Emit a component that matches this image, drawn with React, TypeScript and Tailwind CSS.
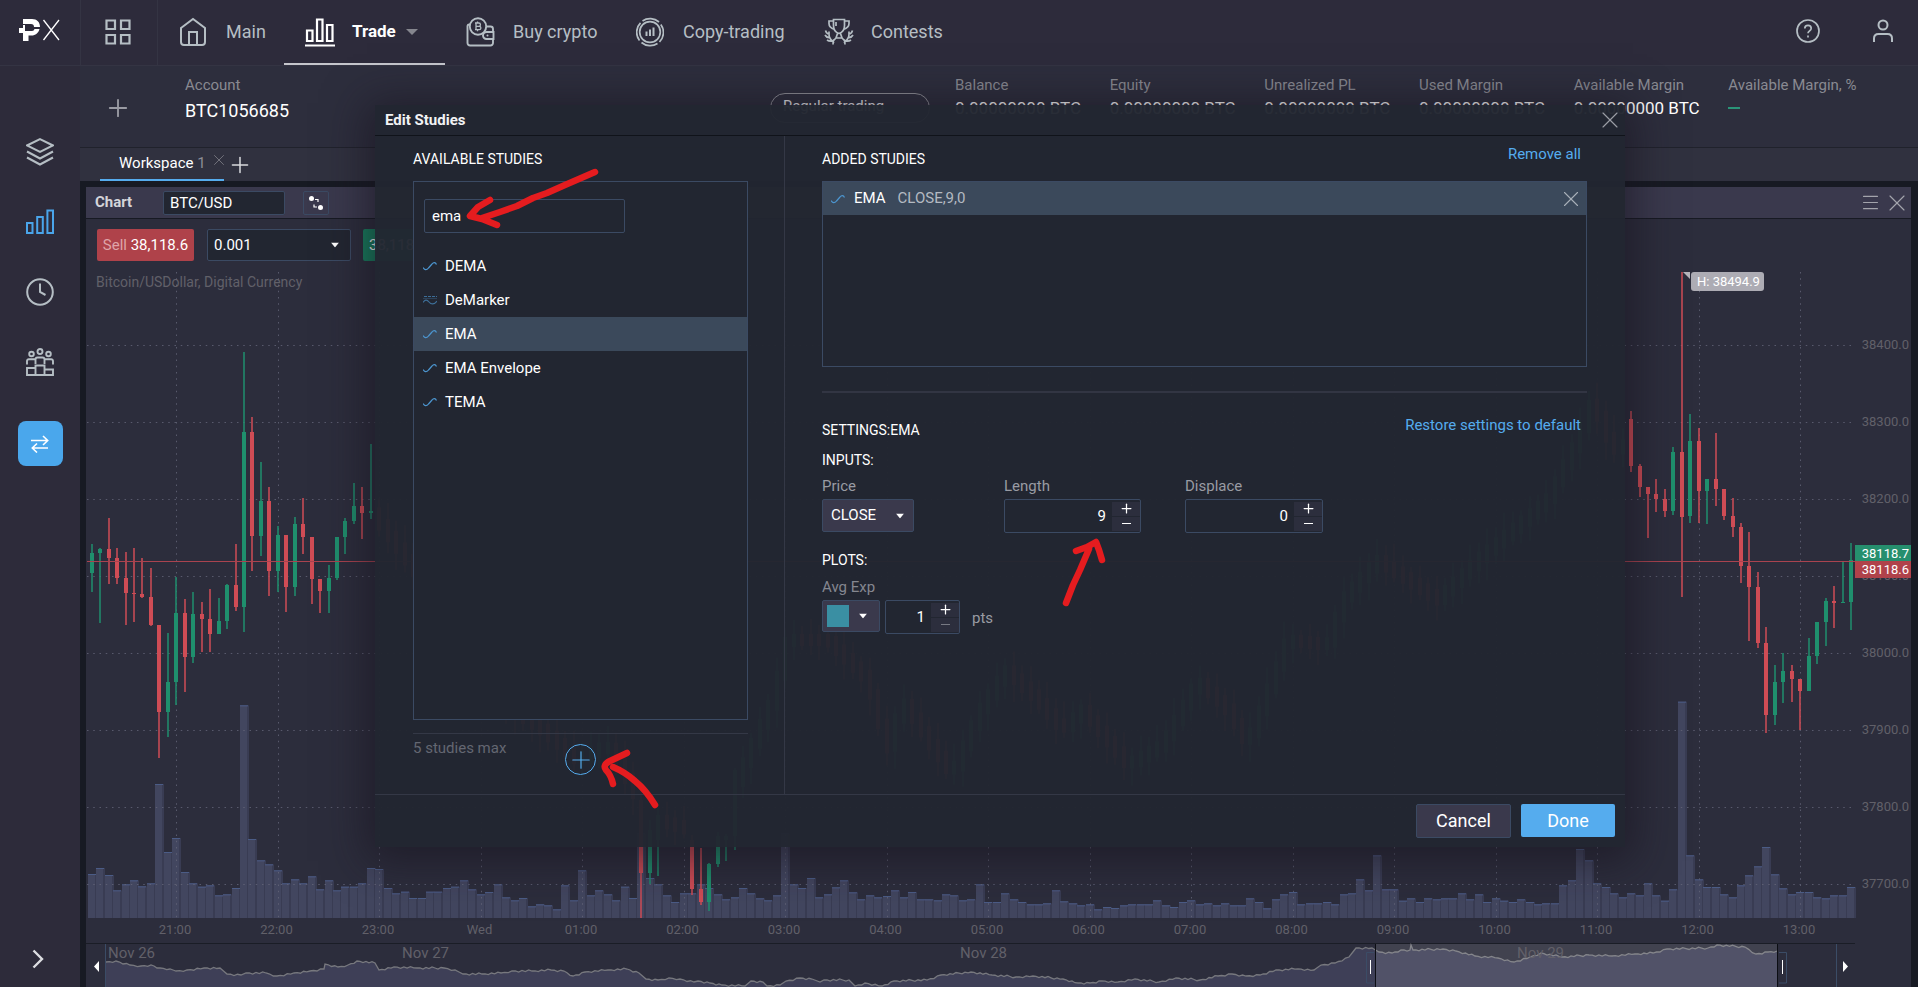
import React, { useId } from "react";
import { Menu, X, Plus } from "lucide-react";

type Candle = [index: number, high: number, top: number, bottom: number, low: number, up: 0 | 1];

const STEP = 8.458;
const xAt = (index: number) => 176.3 + STEP * (index - 10);

const CANDLES: Candle[] = [
  [0, 544, 553, 573, 592, 1], [1, 548, 549, 553, 623, 1], [2, 518, 549, 558, 584, 0], [3, 548, 558, 578, 584, 0],
  [4, 552, 578, 593, 625, 0], [5, 548, 593, 594, 622, 0], [6, 558, 594, 597, 598, 0], [7, 568, 597, 625, 626, 0],
  [8, 625, 625, 712, 758, 0], [9, 633, 682, 712, 737, 1], [10, 577, 613, 682, 705, 1], [11, 599, 613, 657, 692, 0],
  [12, 592, 614, 657, 663, 1], [13, 602, 614, 619, 652, 0], [14, 589, 619, 634, 652, 0], [15, 598, 621, 634, 634, 1],
  [16, 584, 585, 621, 629, 1], [17, 544, 585, 607, 611, 0], [18, 352, 432, 607, 632, 1], [19, 417, 432, 536, 571, 0],
  [20, 462, 501, 536, 556, 1], [21, 487, 501, 571, 596, 0], [22, 526, 535, 571, 592, 1], [23, 535, 535, 587, 612, 0],
  [24, 517, 524, 587, 596, 1], [25, 498, 524, 537, 554, 0], [26, 537, 537, 579, 604, 0], [27, 579, 579, 591, 613, 0],
  [28, 565, 578, 591, 613, 1], [29, 537, 537, 578, 580, 1], [30, 518, 521, 537, 554, 1], [31, 483, 506, 521, 524, 1],
  [32, 487, 506, 513, 539, 0], [33, 444, 511, 513, 519, 1],
  [65, 780, 800, 873, 918, 0], [66, 820, 830, 873, 884, 1], [67, 800, 815, 840, 876, 1], [71, 835, 840, 889, 895, 0],
  [72, 848, 889, 902, 905, 0], [73, 863, 864, 902, 911, 1], [74, 832, 836, 864, 867, 1], [75, 834, 836, 840, 861, 1],
  [76, 768, 770, 836, 850, 1],
  [182, 411, 419, 466, 472, 0], [183, 464, 466, 487, 497, 0], [184, 487, 487, 494, 538, 0], [185, 479, 494, 499, 512, 0],
  [186, 489, 499, 511, 517, 0], [187, 447, 452, 511, 515, 1], [188, 272, 452, 517, 597, 0], [189, 414, 441, 516, 523, 1],
  [190, 428, 441, 491, 523, 0], [191, 479, 479, 491, 524, 1], [192, 433, 479, 489, 506, 0], [193, 489, 489, 516, 520, 0],
  [194, 498, 516, 527, 537, 0], [195, 523, 527, 566, 583, 0], [196, 532, 566, 587, 641, 0], [197, 572, 587, 643, 648, 0],
  [198, 627, 643, 715, 733, 0], [199, 665, 682, 715, 725, 1], [200, 653, 671, 682, 703, 1], [201, 665, 671, 679, 702, 0],
  [202, 679, 679, 691, 730, 0], [203, 638, 656, 691, 691, 1], [204, 622, 622, 656, 664, 1], [205, 598, 601, 622, 646, 1],
  [206, 586, 601, 603, 628, 0], [207, 562, 602, 603, 603, 1], [208, 543, 560, 602, 630, 1],
];

/* Price path of the stretch that lies beneath the dialog. */
const TREND: [number, number][] = [
  [380, 520], [420, 575], [460, 640], [500, 700], [545, 730], [580, 760], [610, 745], [641, 800], [660, 820], [693, 830],
  [735, 790], [755, 745], [775, 700], [790, 640], [830, 640], [870, 680], [890, 750], [905, 700], [930, 740], [955, 775],
  [980, 715], [1008, 670], [1040, 700], [1065, 730], [1085, 710], [1130, 765], [1165, 745], [1190, 700], [1200, 680],
  [1230, 710], [1250, 745], [1275, 680], [1290, 640], [1330, 645], [1345, 600], [1380, 560], [1440, 600], [1480, 560],
  [1550, 500], [1580, 440], [1595, 400], [1615, 450], [1640, 440],
];

function trendAt(x: number) {
  const k = Math.max(1, TREND.findIndex(([tx]) => tx >= x));
  const [x0, y0] = TREND[k - 1];
  const [x1, y1] = TREND[k];
  return y0 + ((y1 - y0) * (x - x0)) / (x1 - x0);
}

const listed = new Set(CANDLES.map((c) => c[0]));
const COVERED: Candle[] = Array.from({ length: 148 }, (_, k) => k + 34)
  .filter((i) => !listed.has(i))
  .map((i) => {
    const a = trendAt(xAt(i) - 4);
    const b = trendAt(xAt(i) + 4);
    const top = Math.min(a, b) - 6;
    const bottom = Math.max(a, b) + 6;
    return [i, top - 5 - ((i * 7) % 13), top, bottom, bottom + 4 + ((i * 5) % 14), b < a ? 1 : 0];
  });

/* Bar tops, in thirds of a pixel below y = 620. */
const VOLUME = [
  762, 744, 765, 811, 793, 781, 799, 790, 492, 696, 654, 756, 790, 800, 796, 826, 823, 804, 256, 657, 721, 733, 751, 790,
  778, 790, 769, 808, 781, 811, 800, 800, 790, 744, 747, 804, 820, 815, 834, 834, 815, 815, 804, 800, 781, 808, 823, 816,
  793, 832, 841, 834, 859, 853, 856, 868, 796, 841, 751, 826, 811, 823, 841, 800, 834, 640, 774, 793, 826, 846, 820, 820,
  793, 804, 823, 838, 832, 804, 820, 835, 841, 826, 640, 793, 804, 774, 832, 823, 802, 781, 817, 838, 826, 832, 828, 811,
  832, 816, 838, 838, 841, 823, 826, 841, 838, 793, 846, 846, 820, 838, 846, 853, 853, 850, 811, 844, 850, 856, 853, 868,
  861, 864, 856, 853, 853, 853, 841, 856, 861, 846, 841, 853, 850, 856, 850, 856, 856, 835, 846, 865, 838, 823, 816, 853,
  850, 850, 846, 853, 823, 820, 778, 811, 706, 808, 808, 842, 835, 846, 835, 838, 835, 835, 820, 838, 823, 846, 835, 842,
  846, 838, 846, 853, 850, 850, 796, 781, 687, 721, 790, 801, 820, 832, 820, 826, 790, 826, 842, 808, 245, 706, 778, 801,
  801, 823, 832, 796, 766, 739, 681, 763, 805, 823, 816, 816, 832, 835, 826, 826, 801,
];

const NAV: [number, number][] = [
  [106, 962], [116, 961], [130, 965], [141, 966], [151, 965], [160, 968], [170, 969], [176, 971], [187, 970], [204, 968],
  [220, 968], [227, 974], [241, 975], [246, 973], [266, 973], [277, 976], [294, 973], [310, 971], [324, 969], [325, 964],
  [338, 967], [348, 965], [357, 961], [375, 963], [379, 970], [394, 967], [417, 968], [444, 968], [455, 970], [463, 974],
  [482, 974], [501, 973], [512, 971], [532, 971], [551, 970], [564, 971], [573, 976], [585, 972], [608, 970], [627, 969],
  [639, 973], [646, 979], [658, 980], [669, 978], [680, 979], [694, 982], [698, 981], [710, 983], [722, 985], [745, 986],
  [751, 981], [763, 982], [767, 986], [780, 985], [786, 981], [800, 978], [812, 979], [820, 982], [824, 980], [849, 980],
  [855, 986], [865, 983], [882, 986], [894, 981], [927, 980], [941, 975], [971, 972], [992, 975], [1016, 977], [1033, 976],
  [1063, 979], [1078, 983], [1090, 983], [1102, 981], [1118, 982], [1135, 979], [1159, 982], [1176, 978], [1200, 980],
  [1218, 976], [1232, 974], [1246, 976], [1260, 975], [1276, 970], [1298, 969], [1314, 970], [1321, 965], [1335, 963],
  [1349, 957], [1356, 948], [1372, 948], [1379, 952], [1392, 953], [1401, 950], [1410, 950], [1411, 945], [1413, 950],
  [1443, 949], [1456, 951], [1475, 956], [1498, 958], [1514, 962], [1530, 957], [1541, 953], [1562, 957], [1589, 955],
  [1612, 956], [1635, 954], [1653, 953], [1667, 949], [1708, 948], [1717, 945], [1745, 947], [1756, 954], [1768, 952],
  [1777, 951],
];

const NAV_LINE = NAV.flatMap(([x, y], k) => {
  const next = NAV[k + 1];
  if (!next) return [`${x},${y}`];
  const n = Math.max(1, Math.floor((next[0] - x) / 3));
  return Array.from({ length: n }, (_, j) => {
    const jitter = j === 0 ? 0 : (((k * 5 + j * 7) % 5) - 2) * 0.5;
    return `${x + ((next[0] - x) * j) / n},${y + ((next[1] - y) * j) / n + jitter}`;
  });
}).join(" ");

const HOURS = ["21:00", "22:00", "23:00", "Wed", "01:00", "02:00", "03:00", "04:00", "05:00", "06:00", "07:00", "08:00", "09:00", "10:00", "11:00", "12:00", "13:00"];
const PRICES = ["38400.0", "38300.0", "38200.0", "38100.0", "38000.0", "37900.0", "37800.0", "37700.0"];

function Chart() {
  return (
    <svg className="block min-h-0 w-full flex-1" viewBox="86 271 1825 716" preserveAspectRatio="xMinYMin slice" fontFamily="Roboto, sans-serif" role="img" aria-label="BTC/USD price chart">
      <text x="96" y="287" fontSize="14" fill="#616069">Bitcoin/USDollar, Digital Currency</text>
      {VOLUME.map((v, i) => {
        const y = 620 + v / 3;
        const x = Math.round(xAt(i) - 4);
        return (
          <g key={i}>
            <rect x={x} y={y} width="8" height={918 - y} fill="#42465f" />
            <rect x={x + 7} y={y} width="2" height={918 - y} fill="#393c53" />
            <rect x={x} y={y} width="8" height="1" fill="#4b5c86" />
          </g>
        );
      })}
      <g stroke="#646679" strokeWidth="1" strokeDasharray="1.5 4.75" opacity="0.8">
        {PRICES.map((p, k) => <line key={p} x1="87" x2="1854" y1={345.5 + k * 77} y2={345.5 + k * 77} />)}
        {HOURS.map((h, k) => <line key={h} x1={Math.round(176 + k * 101.5) + 0.5} x2={Math.round(176 + k * 101.5) + 0.5} y1="272" y2="918" />)}
      </g>
      {[...CANDLES, ...COVERED].map(([i, hi, top, bottom, lo, up]) => {
        const x = Math.round(xAt(i));
        return (
          <g key={i} fill={up ? "#1f8f6d" : "#cf4c55"}>
            <rect x={x - 1} y={hi} width="2" height={lo - hi} opacity="0.75" />
            <rect x={x - 2} y={top} width="4" height={Math.max(1, bottom - top)} />
          </g>
        );
      })}
      <rect x="87" y="561" width="1768" height="1" fill="#a9434f" />
      <g fontSize="13" fill="#616069">
        {PRICES.map((p, k) => <text key={p} x="1909" y={349 + k * 77} textAnchor="end">{p}</text>)}
        {HOURS.map((h, k) => <text key={h} x={175 + k * 101.5} y="934" textAnchor="middle">{h}</text>)}
      </g>
      <rect x="1855" y="545" width="56" height="16" fill="#268f6e" />
      <rect x="1855" y="561" width="56" height="17" fill="#b0424a" />
      <g fontSize="13" fill="#fff">
        <text x="1909" y="558" textAnchor="end">38118.7</text>
        <text x="1909" y="574" textAnchor="end">38118.6</text>
      </g>
      <path d="M1683 272h7v7z" fill="#b5b4bb" />
      <rect x="1691" y="272" width="73" height="19" rx="3" fill="#adacb4" />
      <text x="1697" y="286" fontSize="13" fill="#fff">H: 38494.9</text>

      <rect x="86" y="943" width="1769" height="1" fill="#1a1d26" />
      <polygon points={`106,987 ${NAV_LINE} 1777,987`} fill="#3e3f57" />
      <polyline points={NAV_LINE} fill="none" stroke="#77787e" strokeWidth="1.3" />
      <rect x="1375" y="944" width="402" height="43" fill="#fff" opacity="0.1" />
      <path d="M1375.500 944v43M1777.500 944v43" stroke="#0c0e14" />
      <path d="M105.500 944v43M1836.500 944v43M1374 952.500h-7.500v30.500h7.500M1779 952.500h7.500v30.500h-7.500" fill="none" stroke="#3b4c66" />
      <path d="M1370.500 960v14M1782.500 960v14" stroke="#fff" />
      <path d="M99 961v11l-5-5.500zM1843 961v11l5-5.500z" fill="#fff" />
      <g fontSize="15" fill="#616069">
        <text x="108" y="958">Nov 26</text>
        <text x="402" y="958">Nov 27</text>
        <text x="960" y="958">Nov 28</text>
        <text x="1517" y="958">Nov 29</text>
      </g>
    </svg>
  );
}

function HomeIcon() {
  return (
    <svg viewBox="0 0 28 30" className="h-[30px] w-7" fill="none" stroke="currentColor" strokeWidth="2">
      <path d="M2 11 14 2l12 9v14a3 3 0 0 1-3 3H5a3 3 0 0 1-3-3zM10 28V15h8v13" />
    </svg>
  );
}

function TradeIcon() {
  return (
    <svg viewBox="0 0 30 30" className="h-[30px] w-[30px]" fill="none" stroke="currentColor" strokeWidth="2.200">
      <path d="M2 13.500h5.500v10.500H2zM12 2.500h5.500V24H12zM22 8h5.500v16H22zM0 28.500h30" />
    </svg>
  );
}

function WalletIcon() {
  return (
    <svg viewBox="0 0 29 30" className="h-[30px] w-[29px]" fill="none" stroke="currentColor" strokeWidth="1.900">
      <path d="M4.500 7.500H3.500A1.800 1.800 0 0 0 1.500 9v17a2.500 2.500 0 0 0 2.500 2.500h20.500a2.500 2.500 0 0 0 2.500-2.500v-4M20 9.500h4.500A2.500 2.500 0 0 1 27 12v3" />
      <path d="M27.500 15h-7a3.500 3.500 0 0 0 0 7h7z" />
      <circle cx="12" cy="9.500" r="8.200" />
      <path d="M10 6h2.800a1.600 1.600 0 0 1 0 3.300H10zM10 9.300h3.200a1.700 1.700 0 0 1 0 3.400H10zM9 6h1.500M9 12.700h1.500M11.500 4.500V6M11.500 12.700v1.500" strokeWidth="1.300" />
      <circle cx="21.500" cy="18.500" r="1" fill="currentColor" stroke="none" />
    </svg>
  );
}

function CopyIcon() {
  return (
    <svg viewBox="0 0 28 30" className="h-[30px] w-7" fill="none" stroke="currentColor" strokeWidth="1.700">
      <circle cx="14" cy="15" r="10.300" />
      <path d="M6.500 4A13.500 13.500 0 0 1 23 5M4.500 5.800A13.500 13.500 0 0 0 3.500 23.500M24.800 7.500A13.500 13.500 0 0 1 23.500 25M21.500 26.500A13.500 13.500 0 0 1 5.500 25.500" />
      <path d="M10.500 19v-4.500M14 19v-6.500M17.500 19v-8.500" strokeWidth="2" />
    </svg>
  );
}

function TrophyIcon() {
  return (
    <svg viewBox="0 0 30 28" className="h-7 w-[30px]" fill="none" stroke="currentColor" strokeWidth="1.700">
      <path d="M9.500 1.500h11v6c0 4.500-2 7-5.500 8-3.500-1-5.500-3.500-5.500-8zM9.500 3H5v2.500c0 3 2.500 5 5.500 6M20.500 3H25v2.500c0 3-2.500 5-5.500 6M12 4v4M13.500 15.500 12 20h6l-1.500-4.500M9.500 22.500 12 20M20.500 22.500 18 20" />
      <path d="M1.500 12.500c.5 2 1.500 3 2.500 3.500M1 17c1 1.700 2.500 2.500 4 2.700M5 13.500v3c0 3 1.500 5.500 5 8.500M3 22c1.500 1 3 1.200 5 1M9.500 21.500 9 26.500M28.500 12.500c-.5 2-1.500 3-2.500 3.500M29 17c-1 1.700-2.500 2.500-4 2.700M25 13.500v3c0 3-1.500 5.500-5 8.500M27 22c-1.500 1-3 1.200-5 1M20.500 21.500l.5 5" />
    </svg>
  );
}

function LayersIcon() {
  return (
    <svg viewBox="0 0 28 28" className="h-7 w-7" fill="none" stroke="currentColor" strokeWidth="2">
      <path d="M14 1.200 27 7.500 14 14 1 7.500zM1 13.500 14 20.500l13-7M1 19.500l13 7 13-7" />
    </svg>
  );
}

function BarsIcon() {
  return (
    <svg viewBox="0 0 28 28" className="h-7 w-7" fill="none" stroke="currentColor" strokeWidth="2">
      <path d="M1 15h5.500v10H1zM11.200 9h5.600v16h-5.600zM21.400 2.500H27V25h-5.600z" />
    </svg>
  );
}

function ClockIcon() {
  return (
    <svg viewBox="0 0 28 28" className="h-7 w-7" fill="none" stroke="currentColor" strokeWidth="2">
      <circle cx="14" cy="14" r="12.800" />
      <path d="M14 5.500V14l5.500 3" />
    </svg>
  );
}

function LeadersIcon() {
  return (
    <svg viewBox="0 0 28 28" className="h-7 w-7" fill="none" stroke="currentColor" strokeWidth="1.900">
      <circle cx="14" cy="3.500" r="2.500" />
      <circle cx="5.500" cy="6" r="2.300" />
      <circle cx="22.500" cy="6" r="2.300" />
      <path d="M9.500 16v-4.500a2 2 0 0 1 2-2h5a2 2 0 0 1 2 2V16M1 16.500V13a1.800 1.800 0 0 1 1.800-1.800h6M27 16.500V13a1.800 1.800 0 0 0-1.800-1.800h-6M1 20h8.500v7H1zM9.500 17.500h9V27h-9zM18.500 21.500H27V27h-8.500z" />
    </svg>
  );
}

function Wave({ banded }: { banded?: boolean }) {
  return (
    <svg viewBox="0 0 14 10" className="h-2.5 w-3.5 shrink-0" fill="none" stroke="#4c95cf" strokeWidth="1.200">
      {banded ? (
        <g opacity="0.65">
          <path d="M1 1.500h13" strokeDasharray="3 1" />
          <path d="M0 7.500c2-3 4-3 6-.5s5 3 8-1" />
          <path d="M0 3.500h14" opacity="0.400" />
        </g>
      ) : (
        <path d="M0 6.500c1.500 2.500 3.500 3 5.500.5L9 3c1.500-2 3.500-2 4.500.5" />
      )}
    </svg>
  );
}

function Caret({ className = "right-2.5" }: { className?: string }) {
  return (
    <svg viewBox="0 0 8 5" className={`pointer-events-none absolute top-1/2 h-[5px] w-2 -translate-y-1/2 ${className}`} fill="#fff">
      <path d="M0 0h8L4 5z" />
    </svg>
  );
}

function Stepper({ label, value, className, hideLabel, atMin }: { label: string; value: number; className: string; hideLabel?: boolean; atMin?: boolean }) {
  const id = useId();
  return (
    <div>
      {!hideLabel && <label htmlFor={id} className="block h-[23px] leading-5 text-[#999ba3]">{label}</label>}
      <div className={`flex h-[34px] items-center rounded-xs border border-[#3b4a63] bg-[#222631] py-0.5 ${className}`}>
        <input id={id} aria-label={hideLabel ? label : undefined} defaultValue={value} className="h-full min-w-0 flex-1 bg-transparent pr-1.5 text-right text-[15px] text-white outline-none" />
        <div className="flex w-7 flex-col gap-px text-white">
          <button aria-label={`Increase ${label}`} className="flex h-3.5 items-center justify-center bg-[#2c2e3d]"><Plus size={15} strokeWidth={2} /></button>
          <button aria-label={`Decrease ${label}`} className="flex h-3.5 items-center justify-center bg-[#2c2e3d]">
            <span className={atMin ? "h-px w-[9px] bg-[#777983]" : "h-px w-[9px] bg-white"} />
          </button>
        </div>
      </div>
    </div>
  );
}

const STUDIES = ["DEMA", "DeMarker", "EMA", "EMA Envelope", "TEMA"];

function EditStudies() {
  return (
    <section role="dialog" aria-labelledby="studies-title" className="relative flex w-[1250px] flex-col bg-[#222631]/[0.97] text-[15px] text-white shadow-[0_6px_40px_8px_rgba(24,18,30,0.6)]">
      <header className="flex h-[31px] items-center justify-between border-b border-[#10131a] pl-2.5 pr-px">
        <h2 id="studies-title" className="text-[15px] font-bold leading-5 text-[#f1f2f4]">Edit Studies</h2>
        <button aria-label="Close" className="text-[#9a9ca4]"><X size={28} strokeWidth={1} /></button>
      </header>
      <div className="flex h-[658px]">
        <div className="flex w-[410px] flex-col border-r border-[#343846] pl-[38px] pr-9 pt-[13px]">
          <h3 className="text-sm leading-5">AVAILABLE STUDIES</h3>
          <div className="mt-3 h-[539px] border border-[#3b4a63] bg-[#222631] pt-[17px]">
            <input aria-label="Search studies" defaultValue="ema" className="ml-2.5 h-[34px] w-[201px] rounded-xs border border-[#3b4a63] bg-transparent px-[7px] text-[15px] outline-none" />
            <ul className="mt-4">
              {STUDIES.map((s) => (
                <li key={s}>
                  <button className={`flex h-[34px] w-full items-center gap-2 pl-[9px] text-left ${s === "EMA" ? "bg-[#3b495b]" : ""}`}>
                    <Wave banded={s === "DeMarker"} />
                    {s}
                  </button>
                </li>
              ))}
            </ul>
          </div>
          <div className="mt-[13px] flex border-t border-[#343846] pt-1 text-[#646771]">
            <span className="w-[152px] leading-5">5 studies max</span>
            <button aria-label="Add study" className="mt-1.5 flex h-[31px] w-[31px] items-center justify-center rounded-full border border-[#55acee] text-[#55acee]">
              <Plus size={28} strokeWidth={1} />
            </button>
          </div>
        </div>
        <div className="flex-1 pl-[37px] pr-[38px] pt-[7px]">
          <div className="flex justify-between">
            <h3 className="pt-1.5 text-sm leading-5">ADDED STUDIES</h3>
            <button className="mr-1.5 h-[22px] text-[#55acee]">Remove all</button>
          </div>
          <div className="mt-3 h-[186px] border border-[#3b4a63] bg-[#222631]">
            <div className="flex h-[33px] items-center bg-[#3b495b] pl-2 pr-0.5">
              <Wave />
              <span className="ml-[9px]">EMA</span>
              <span className="ml-3 flex-1 text-[#b4bac2]">CLOSE,9,0</span>
              <button aria-label="Remove EMA" className="text-[#a9b0b9]"><X size={26} strokeWidth={1} /></button>
            </div>
          </div>
          <div className="mt-6 border-t-2 border-[#323543]" />
          <div className="mt-[21px] flex justify-between">
            <h3 className="pt-1 text-sm leading-6">SETTINGS:EMA</h3>
            <button className="mr-1.5 h-5 text-[#55acee]">Restore settings to default</button>
          </div>
          <h3 className="mt-2 text-sm leading-5">INPUTS:</h3>
          <div className="mt-1.5 flex">
            <div className="w-[182px]">
              <label htmlFor="price" className="block h-[23px] leading-5 text-[#999ba3]">Price</label>
              <div className="relative w-[92px]">
                <select id="price" className="h-[33px] w-full appearance-none rounded-xs border border-[#3b4a63] bg-[#3a394c] px-2 text-[15px]">
                  <option>CLOSE</option>
                </select>
                <Caret />
              </div>
            </div>
            <div className="w-[181px]"><Stepper label="Length" value={9} className="w-[137px]" /></div>
            <Stepper label="Displace" value={0} className="w-[138px]" />
          </div>
          <h3 className="mt-[17px] text-sm leading-5">PLOTS:</h3>
          <label htmlFor="color" className="mt-[7px] block leading-5 text-[#858790]">Avg Exp</label>
          <div className="mt-[3px] flex">
            <div className="relative h-8 w-[58px] rounded-xs border border-[#3b4a63] bg-[#3a394c] p-1">
              <div className="h-[22px] w-[22px] bg-[#3a8fa3]" />
              <Caret className="right-3" />
              <select id="color" className="absolute inset-0 h-full w-full opacity-0"><option>Teal</option></select>
            </div>
            <div className="ml-[5px]"><Stepper label="Width" hideLabel atMin value={1} className="w-[75px]" /></div>
            <span className="ml-3 pt-2 leading-5 text-[#999ba3]">pts</span>
          </div>
        </div>
      </div>
      <footer className="flex h-[53px] justify-end gap-2.5 border-t border-[#343846] px-2.5 pt-[9px] text-lg">
        <button className="h-[34px] w-[95px] rounded-xs border border-[#3b4a63] bg-[#3a394c]">Cancel</button>
        <button className="h-[33px] w-[94px] rounded-xs bg-[#55acee]">Done</button>
      </footer>
      <svg className="pointer-events-none absolute inset-0 h-full w-full" viewBox="375 105 1250 742" fill="none" stroke="#e51c1f" strokeWidth="6.500" strokeLinecap="round" strokeLinejoin="round">
        <path d="M595 172 565 185 547 193 533 198 517 206 500 212 482 218M490 200 478 207 470 216 482 219 497 225" />
        <path d="M655 805Q646 790 635 781 625 772 613 767M627 753 610 761Q602 765 606 770 611 775 613 784" />
        <path d="M1066 603 1073 585 1080 570 1089 549M1076 551 1087 547 1096 542 1099 550 1102 560" />
      </svg>
    </section>
  );
}

function TopBar() {
  const item = "flex h-full items-center whitespace-nowrap";
  return (
    <header className="flex h-[66px] shrink-0 items-stretch border-b border-[#343443] bg-[#2d2b3b] text-lg text-[#b5bec4]">
      <a href="#" aria-label="PX" className="flex w-[81px] items-center border-r border-[#343443] pb-1 pl-[19px]">
        <svg viewBox="0 0 41 23" className="h-[23px] w-[41px]" fill="#fff">
          <path d="M4 0h9c5 0 8 3 8 8h-6c0-2-1-3-3-3H4zM0 9h4V6h2v6h7c1.500 0 2-1 2.500-2h5c-1 4-4 6.500-8 6.500h-3V22H4v-8H0z" />
          <path d="M24.500 1 40 21M40 1 24.500 21" stroke="#fff" strokeWidth="1.300" />
        </svg>
      </a>
      <button aria-label="Apps" className="flex w-[77px] items-center border-r border-[#343443] pb-px pl-6">
        <svg viewBox="0 0 26 26" className="h-[26px] w-[26px]" fill="none" stroke="currentColor" strokeWidth="2.200">
          <path d="M1.500 1.500h8.500v8.500H1.500zM16 1.500h8.500v8.500H16zM1.500 16h8.500v8.500H1.500zM16 16h8.500v8.500H16z" />
        </svg>
      </button>
      <nav className="flex flex-1 pb-px">
        <a href="#" className={`${item} w-[126px] gap-[19px] pl-[21px]`}><HomeIcon />Main</a>
        <a href="#" className="-mb-px flex w-[161px] items-center border-b-2 border-[#c5c6cc] pl-[21px] text-[17px] text-white">
          <TradeIcon />
          <span className="ml-[17px] font-bold">Trade</span>
          <svg viewBox="0 0 12 6" className="ml-2.5 h-1.5 w-3" fill="#85868e"><path d="M0 0h12L6 6z" /></svg>
        </a>
        <a href="#" className={`${item} w-[171px] gap-[18px] pl-[21px]`}><WalletIcon />Buy crypto</a>
        <a href="#" className={`${item} w-[188px] gap-[19px] pl-5`}><CopyIcon />Copy-trading</a>
        <a href="#" className={`${item} gap-[17px] pl-5`}><TrophyIcon />Contests</a>
      </nav>
      <div className="flex items-center gap-[53px] pb-1 pr-[25px]">
        <button aria-label="Help">
          <svg viewBox="0 0 24 24" className="h-6 w-6" fill="none" stroke="currentColor" strokeWidth="1.700">
            <circle cx="12" cy="12" r="11" />
            <path d="M8.800 9.500C8.800 7.500 10 6.300 12 6.300s3.200 1.200 3.200 3c0 2.500-3.200 2.500-3.200 5M12 16.500v2" />
          </svg>
        </button>
        <button aria-label="Profile">
          <svg viewBox="0 0 20 24" className="h-6 w-5" fill="none" stroke="currentColor" strokeWidth="2">
            <circle cx="10" cy="6" r="4.500" />
            <path d="M1 23v-3.500c0-3 2-4.500 4.500-4.500h9c2.500 0 4.500 1.500 4.500 4.500V23" />
          </svg>
        </button>
      </div>
    </header>
  );
}

function Sidebar() {
  return (
    <aside className="flex w-20 shrink-0 flex-col items-center bg-[#2d2b3a] pb-4 pt-[72px] text-[#b5bec4]">
      <div className="flex flex-col gap-[42px]">
        <button aria-label="Assets"><LayersIcon /></button>
        <button aria-label="Charts" className="text-[#4aa5ea]"><BarsIcon /></button>
        <button aria-label="History"><ClockIcon /></button>
        <button aria-label="Leaders"><LeadersIcon /></button>
      </div>
      <button aria-label="Transfer" className="mt-[45px] flex h-[45px] w-[45px] items-center justify-center rounded-lg bg-[#4aa7ec] text-white">
        <svg viewBox="0 0 18 18" className="h-[18px] w-[18px]" fill="none" stroke="currentColor" strokeWidth="1.600">
          <path d="M0 5.500h16.500M12 1l4.700 4.500L12 10M17 13H1.500M6 8.500 1.300 13 6 17.500" />
        </svg>
      </button>
      <button aria-label="Expand" className="mt-auto flex h-6 items-center pr-1">
        <svg viewBox="0 0 12 20" className="h-5 w-3" fill="none" stroke="#dcdde1" strokeWidth="2.400"><path d="m1.500 1.500 8.500 8.500-8.500 8.500" /></svg>
      </button>
    </aside>
  );
}

const METRICS = ["Balance", "Equity", "Unrealized PL", "Used Margin", "Available Margin"];

function AccountBar() {
  return (
    <div className="flex h-[82px] shrink-0 border-b border-[#20222c] bg-[#2d2e3d] pl-6 pr-[35px] pt-[9px] text-[15px] text-[#898a92]">
      <button aria-label="Add account" className="flex h-[66px] w-[81px] items-center text-[#9a9ba3]"><Plus size={28} strokeWidth={1.6} /></button>
      <div className="flex-1">
        <div className="leading-5">Account</div>
        <div className="mt-1 text-lg leading-6 text-white">BTC1056685</div>
      </div>
      <button className="mr-[25px] mt-[18px] h-[30px] w-[160px] rounded-2xl border border-[#8d8e96] pb-1 pl-3 text-left text-[#e8e9ec]">Regular trading</button>
      <div className="grid w-[928px] grid-cols-6">
        {METRICS.map((m) => (
          <div key={m}>
            <div className="leading-5">{m}</div>
            <div className="mt-px text-[17px] leading-6 text-white">0.00000000 BTC</div>
          </div>
        ))}
        <div>
          <div className="leading-5">Available Margin, %</div>
          <div className="mt-3 h-0.5 w-3 bg-[#2a9478]" aria-label="No value" />
        </div>
      </div>
    </div>
  );
}

function Workspace() {
  return (
    <>
      <div className="flex h-[33px] shrink-0 bg-[#30313f] pl-5 text-[15px]">
        <div className="-mb-px flex w-[124px] items-center whitespace-nowrap border-b-3 border-[#55acee] pl-[19px] text-white">
          <span>Workspace <span className="text-[#8c8d95]">1</span></span>
          <button aria-label="Close workspace" className="mb-2 ml-1 shrink-0 text-[#85868e]"><X size={18} strokeWidth={1} /></button>
        </div>
        <button aria-label="Add workspace" className="ml-[3px] text-[#d8d9dd]"><Plus size={26} strokeWidth={1.4} /></button>
      </div>
      <div className="flex min-h-0 flex-1 flex-col bg-[#171a23] pl-1.5 pr-[7px] pt-1.5">
        <div className="flex min-h-0 flex-1 flex-col bg-[#2c2d3c]">
          <div className="flex h-8 shrink-0 items-center border-b border-[#171a23] bg-[#3a394d] pl-[9px] text-[15px]">
            <h2 className="w-[68px] font-bold text-[#d4d5d9]">Chart</h2>
            <input aria-label="Instrument" defaultValue="BTC/USD" className="h-6 w-[122px] rounded-xs border border-[#3b4a63] bg-[#222631] px-1.5 text-white" />
            <button aria-label="Link" className="ml-[18px] flex h-6 w-[26px] items-center justify-center rounded-xs border border-[#3b4a63]">
              <svg viewBox="0 0 14 14" className="h-3.5 w-3.5" fill="#fff">
                <circle cx="2.500" cy="2.500" r="2.500" />
                <circle cx="11.500" cy="11.500" r="2.500" />
                <path d="M6 3.500h3v2.500M8 11H5V8.500" fill="none" stroke="#fff" strokeWidth="1.200" />
              </svg>
            </button>
            <div className="ml-auto flex items-center gap-0.5 text-[#a3a4ac]">
              <button aria-label="Chart menu"><Menu size={21} strokeWidth={1.2} /></button>
              <button aria-label="Close chart"><X size={28} strokeWidth={1} /></button>
            </div>
          </div>
          <div className="flex h-[52px] shrink-0 pl-[11px] pt-2.5 text-[15px] text-white">
            <button className="h-8 w-[97px] rounded-xs bg-[#af424a]"><span className="text-[#dea4a8]">Sell</span> 38,118.6</button>
            <div className="relative ml-[13px] h-8 w-36">
              <select aria-label="Amount" className="h-full w-full appearance-none rounded-xs border border-[#3b4a63] bg-[#222631] pl-1.5"><option>0.001</option></select>
              <Caret className="right-3" />
            </div>
            <button className="ml-3 h-8 w-[97px] rounded-xs bg-[#17805f] pl-1.5 text-left">38,118.7 Buy</button>
          </div>
          <Chart />
        </div>
      </div>
    </>
  );
}

export default function App() {
  return (
    <div className="flex h-screen flex-col overflow-hidden bg-[#2c2d3c] font-[Roboto,sans-serif]">
      <TopBar />
      <div className="flex min-h-0 flex-1">
        <Sidebar />
        <main className="relative flex min-w-0 flex-1 flex-col">
          <AccountBar />
          <Workspace />
          <div className="absolute inset-x-0 top-[39px] flex justify-center pl-0.5">
            <EditStudies />
          </div>
        </main>
      </div>
    </div>
  );
}
